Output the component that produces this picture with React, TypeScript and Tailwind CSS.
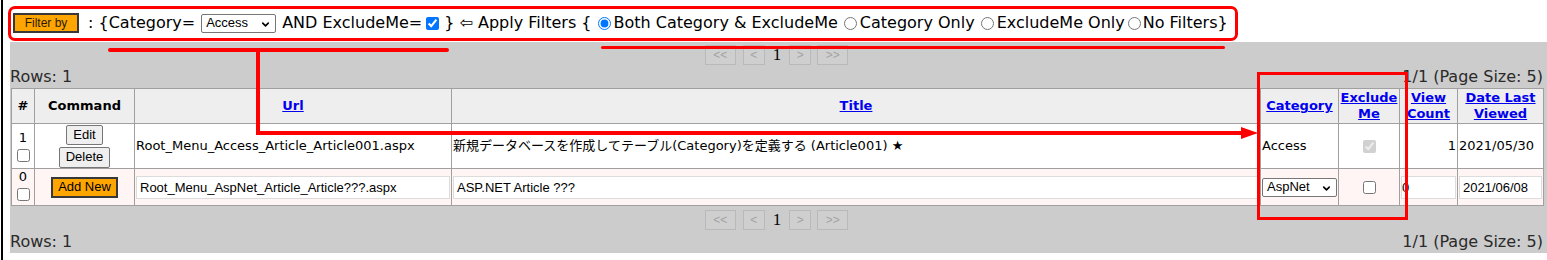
import { ChevronDown } from 'lucide-react'

const sans = "font-['DejaVu_Sans','Noto_Sans_CJK_JP',sans-serif]"
const arial = "font-['Liberation_Sans',Arial,sans-serif]"

function Select({ value, className }: { value: string; className: string }) {
  return (
    <span
      className={`relative flex h-[19px] items-center rounded-[2px] border border-[#767676] bg-white pl-[4px] text-[13px] text-black ${arial} ${className}`}
    >
      {value}
      <ChevronDown className="absolute right-[4px] top-[4px] size-[11px]" strokeWidth={3.5} />
    </span>
  )
}

function PageBtn({ label, className }: { label: string; className: string }) {
  return (
    <span
      className={`flex h-[20px] items-center justify-center border border-[#b9b9b9] bg-[#cfcfcf] text-[12px] text-[#a3a3a3] ${arial} ${className}`}
    >
      {label}
    </span>
  )
}

function Pager() {
  return (
    <div className="flex h-[23px] items-start justify-center pt-[3px]">
      <PageBtn label="<<" className="w-[31px]" />
      <PageBtn label="<" className="ml-[7px] w-[22px]" />
      <span className="ml-[8px] mr-[8px] font-['Liberation_Serif',serif] text-[17px] leading-[20px] text-black">1</span>
      <PageBtn label=">" className="w-[22px]" />
      <PageBtn label=">>" className="ml-[6px] w-[31px]" />
    </div>
  )
}

function RowsLine() {
  return (
    <div className="flex h-[23px] items-center justify-between text-[16px] leading-[19px] text-[#2a2a2a]">
      <span>Rows: 1</span>
      <span>1/1 (Page Size: 5)</span>
    </div>
  )
}

function Radio({ checked, label }: { checked?: boolean; label: string }) {
  return (
    <>
      <input type="radio" name="flt" defaultChecked={checked} className="ml-[6px] size-[13px]" />
      <span className="ml-[3px]">{label}</span>
    </>
  )
}

const th = 'border border-[#a0a0a0] bg-[#eeeeee] px-px text-center align-middle font-bold leading-[16px]'
const link = 'text-[#0000ee] underline'
const td = 'border border-[#a0a0a0] px-px align-middle'
const box = 'h-[23px] w-full border border-[#dcdcdc] bg-white px-[3px] text-[13px] text-black'

export default function App() {
  return (
    <div className={`relative ml-px h-[260px] w-[1546px] overflow-hidden border-l-2 border-black bg-white ${sans}`}>
      {/* filter bar */}
      <div className="flex h-[42px] items-center whitespace-nowrap pl-[10px] pt-[4px] text-[16px] text-black">
        <span className={`flex h-[20px] w-[66px] items-center justify-center border-2 border-[#383838] bg-[#ffa500] text-[12px] text-[#2b1a00] ${arial}`}>
          Filter by
        </span>
        <span className="ml-[9px]">: {'{'}Category=</span>
        <Select value="Access" className="ml-[6px] w-[75px]" />
        <span className="ml-[6px]">AND ExcludeMe=</span>
        <input type="checkbox" defaultChecked className="ml-[4px] size-[13px]" />
        <span className="ml-[5px]">{'}'} ⇦ Apply Filters {'{'}</span>
        <Radio checked label="Both Category & ExcludeMe" />
        <Radio label="Category Only" />
        <Radio label="ExcludeMe Only" />
        <input type="radio" name="flt" className="ml-[3px] size-[13px]" />
        <span className="ml-[2px]">No Filters{'}'}</span>
      </div>

      {/* grid panel */}
      <div className="ml-[7px] bg-[#cccccc] pr-[4px]">
        <Pager />
        <RowsLine />
        <table className="ml-px w-[1532px] table-fixed border-collapse bg-white text-[13px] text-black">
          <colgroup>
            <col className="w-[23px]" />
            <col className="w-[100px]" />
            <col className="w-[317px]" />
            <col className="w-[809px]" />
            <col className="w-[78px]" />
            <col className="w-[61px]" />
            <col className="w-[58px]" />
            <col className="w-[86px]" />
          </colgroup>
          <thead>
            <tr className="h-[35px]">
              <th className={th}>#</th>
              <th className={th}>Command</th>
              <th className={th}><span className={link}>Url</span></th>
              <th className={th}><span className={link}>Title</span></th>
              <th className={th}><span className={link}>Category</span></th>
              <th className={th}><span className={link}>Exclude Me</span></th>
              <th className={th}><span className={link}>View Count</span></th>
              <th className={th}><span className={link}>Date Last Viewed</span></th>
            </tr>
          </thead>
          <tbody>
            <tr className="h-[45px]">
              <td className={td}>
                <div className="flex flex-col items-center">
                  <span className="leading-[16px]">1</span>
                  <input type="checkbox" className="mt-[3px] size-[13px]" />
                </div>
              </td>
              <td className={td}>
                <div className={`flex flex-col items-center gap-[2px] text-[13px] ${arial}`}>
                  <span className="flex h-[20px] items-center rounded-[2px] border border-[#767676] bg-[#efefef] px-[6px]">Edit</span>
                  <span className="flex h-[21px] items-center rounded-[2px] border border-[#767676] bg-[#efefef] px-[6px]">Delete</span>
                </div>
              </td>
              <td className={td}>Root_Menu_Access_Article_Article001.aspx</td>
              <td className={td}>新規データベースを作成してテーブル(Category)を定義する (Article001) ★</td>
              <td className={td}>Access</td>
              <td className={`${td} text-center`}>
                <input type="checkbox" defaultChecked disabled className="size-[13px] align-middle" />
              </td>
              <td className={`${td} text-right`}>1</td>
              <td className={td}>2021/05/30</td>
            </tr>
            <tr className="h-[37px] bg-[#fff5f5]">
              <td className={`${td} align-top`}>
                <div className="flex flex-col items-center">
                  <span className="leading-[16px]">0</span>
                  <input type="checkbox" className="mt-[3px] size-[13px]" />
                </div>
              </td>
              <td className={`${td} text-center`}>
                <span className={`inline-flex h-[21px] items-center border-2 border-[#383838] bg-[#ffa500] px-[5px] text-[13px] ${arial}`}>Add New</span>
              </td>
              <td className={`${td} px-[2px]`}>
                <input readOnly value="Root_Menu_AspNet_Article_Article???.aspx" className={`${box} ${arial}`} />
              </td>
              <td className={`${td} px-[2px]`}>
                <input readOnly value="ASP.NET Article ???" className={`${box} ${arial}`} />
              </td>
              <td className={td}>
                <Select value="AspNet" className="w-[75px]" />
              </td>
              <td className={`${td} text-center`}>
                <input type="checkbox" className="size-[13px] align-middle" />
              </td>
              <td className={`${td} px-[2px]`}>
                <input readOnly value="0" className={`h-[23px] w-full border border-[#dcdcdc] bg-white pl-0 text-[13px] text-black ${arial}`} />
              </td>
              <td className={`${td} px-[2px]`}>
                <input readOnly value="2021/06/08" className={`${box} ${arial}`} />
              </td>
            </tr>
          </tbody>
        </table>
        <div className="pt-px">
          <Pager />
        </div>
        <RowsLine />
      </div>

      {/* red annotations */}
      <div className="absolute left-[5px] top-[6px] h-[35px] w-[1230px] rounded-[7px] border-[3px] border-[#ff0000]" />
      <div className="absolute left-[105px] top-[48px] h-[4px] w-[341px] rounded-full bg-[#ff0000]" />
      <div className="absolute left-[598px] top-[46px] h-[3px] w-[624px] rounded-full bg-[#ff0000]" />
      <div className="absolute left-[253px] top-[50px] h-[85px] w-[4px] rounded-t-full bg-[#ff0000]" />
      <div className="absolute left-[253px] top-[131px] h-[4px] w-[988px] rounded-bl-[2px] bg-[#ff0000]" />
      <svg className="absolute left-[1238px] top-[127px]" width="17" height="12" viewBox="0 0 17 12">
        <path d="M0 0 L17 6 L0 12 Z" fill="#ff0000" />
      </svg>
      <div className="absolute left-[1254px] top-[72px] h-[148px] w-[151px] border-[3px] border-[#ff0000]" />
    </div>
  )
}
